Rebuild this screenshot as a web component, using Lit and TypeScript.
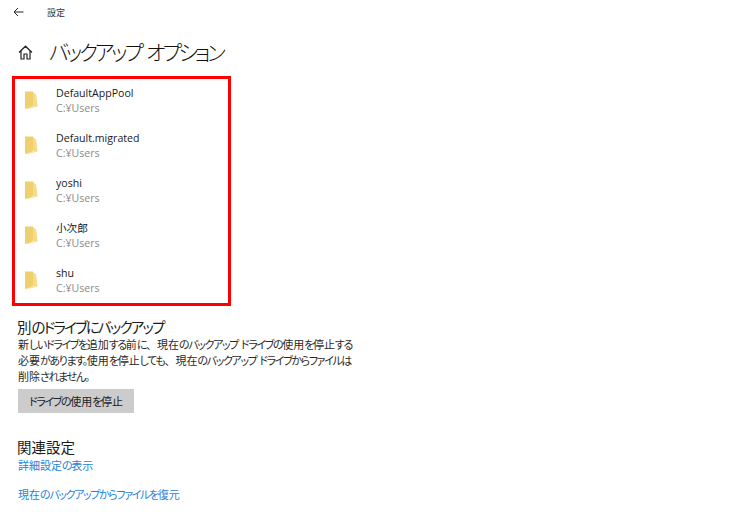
import { LitElement, html, css, svg } from "lit";
import { customElement } from "lit/decorators.js";

const rows = [
  ["DefaultAppPool", "C:¥Users"],
  ["Default.migrated", "C:¥Users"],
  ["yoshi", "C:¥Users"],
  ["小次郎", "C:¥Users"],
  ["shu", "C:¥Users"],
];

const folder = html`<svg class="folder" width="14" height="20" viewBox="0 0 14 20">
  <path d="M1 1.5 L9 1.5 L9 17.5 L1 19 Z" fill="#f0cf6e"/>
  <path d="M9 3 L12 5 L13.5 16.5 L8 18 L2 19 L1 19 L7 17 L9 15 Z" fill="#fbe6a0"/>
  <path d="M9 2 L12 4.5 L13.5 16.5 L9 16 Z" fill="#f7dc88"/>
</svg>`;

/* The reference font has narrow kana: tighten kana runs and keep kanji and the comma at full width. */
const jp = (text: string) =>
  text
    .split(/([\u3041-\u30ff。]+)/)
    .map((part, i) => (i % 2 ? html`<span class="k">${part}</span>` : part));

@customElement("app-root")
export class AppRoot extends LitElement {
  static styles = css`
    :host {
      display: block;
      width: 750px;
      height: 525px;
      background: #fff;
      overflow: hidden;
      font-family: "Open Sans", "Noto Sans CJK JP", sans-serif;
      color: #1a1a1a;
    }
    .k { letter-spacing: -0.125em; font-feature-settings: "palt"; }
    .top { display: flex; align-items: center; height: 25px; padding-left: 13px; }
    .top svg { display: block; margin-top: -2px; }
    .top .label { font-size: 9px; margin-left: 23px; color: #333; line-height: 25px; }
    .title { display: flex; align-items: center; height: 30px; margin-top: 12px; padding-left: 18px; }
    .title .text { font-size: 21px; line-height: 30px; margin-left: 16px; color: #111; font-weight: 300; }
    .title .k { letter-spacing: -0.15em; }
    .box {
      box-sizing: border-box;
      width: 219px;
      height: 230px;
      margin: 9px 0 0 12px;
      border: 3px solid #f00;
    }
    .row { display: flex; height: 45px; align-items: center; padding-left: 9px; }
    .folder { margin-top: -3px; }
    .row .t { margin-left: 18px; margin-top: -1px; }
    .name { font-size: 10.6px; line-height: 15px; color: #1a1a1a; }
    .path { font-size: 10.6px; line-height: 15px; color: #8a8a8a; }
    .section { padding-left: 18px; }
    .h { font-size: 14.5px; line-height: 20px; color: #1a1a1a; margin-top: 12px; margin-left: -1px; }
    .p { font-size: 11px; line-height: 16px; color: #2a2a2a; white-space: nowrap; margin-top: -1px; }
    .btn {
      display: flex; align-items: center; justify-content: center;
      width: 116px; height: 24px; margin-top: 4px;
      background: #ccc; font-size: 11px; color: #222;
    }
    .h2 { margin-top: 25px; }
    a { display: block; font-size: 11px; line-height: 16px; color: #1a84dc; text-decoration: none; }
    a.second { margin-top: 13px; }
  `;

  render() {
    return html`
      <div class="top">
        <svg width="11" height="10" viewBox="0 0 11 10" fill="none" stroke="#222" stroke-width="1">
          <path d="M10.5 5 H1 M5 1 L1 5 L5 9" />
        </svg>
        <span class="label">設定</span>
      </div>
      <div class="title">
        <svg width="15" height="15" viewBox="0 0 15 15" fill="none" stroke="#222" stroke-width="1.2">
          ${svg`<path d="M1 7.5 L7.5 1.2 L14 7.5 M3 6 V14 H6 V9 H9 V14 H12 V6" />`}
        </svg>
        <div class="text">${jp("バックアップ オプション")}</div>
      </div>
      <div class="box">
        ${rows.map(
          ([n, p]) => html`<div class="row">
            ${folder}
            <div class="t">
              <div class="name">${n}</div>
              <div class="path">${p}</div>
            </div>
          </div>`
        )}
      </div>
      <div class="section">
        <div class="h">${jp("別のドライブにバックアップ")}</div>
        <div class="p">
          ${jp("新しいドライブを追加する前に、現在のバックアップ ドライブの使用を停止する")}<br />
          ${jp("必要があります。使用を停止しても、現在のバックアップ ドライブからファイルは")}<br />
          ${jp("削除されません。")}
        </div>
        <div class="btn"><span>${jp("ドライブの使用を停止")}</span></div>
        <div class="h h2">関連設定</div>
        <a>${jp("詳細設定の表示")}</a>
        <a class="second">${jp("現在のバックアップからファイルを復元")}</a>
      </div>
    `;
  }
}
